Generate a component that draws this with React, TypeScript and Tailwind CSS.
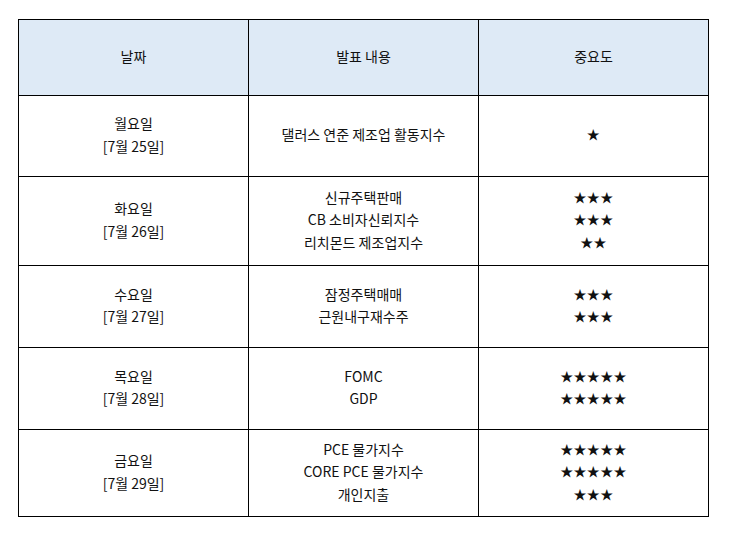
const rows = [
  { day: "월요일", date: "[7월 25일]", items: ["댈러스 연준 제조업 활동지수"], stars: [1], h: "h-[81px]" },
  {
    day: "화요일",
    date: "[7월 26일]",
    items: ["신규주택판매", "CB 소비자신뢰지수", "리치몬드 제조업지수"],
    stars: [3, 3, 2],
    h: "h-[89px]",
  },
  { day: "수요일", date: "[7월 27일]", items: ["잠정주택매매", "근원내구재수주"], stars: [3, 3], h: "h-[82px]" },
  { day: "목요일", date: "[7월 28일]", items: ["FOMC", "GDP"], stars: [5, 5], h: "h-[82px]" },
  {
    day: "금요일",
    date: "[7월 29일]",
    items: ["PCE 물가지수", "CORE PCE 물가지수", "개인지출"],
    stars: [5, 5, 3],
    h: "h-[87px]",
  },
];

export default function App() {
  return (
    <div
      className="min-h-[534px] bg-white pl-[18px] pt-[19px] text-[14px] leading-[22.5px] text-[#111]"
      style={{ fontFamily: '"Noto Sans CJK KR", "Noto Sans", sans-serif' }}
    >
      <table className="w-[690px] table-fixed border-collapse border border-black text-center">
        <thead>
          <tr className="h-[76px] bg-[#deeaf6]">
            <th className="w-[230px] border border-black pb-[3px] font-normal">날짜</th>
            <th className="w-[230px] border border-black pb-[3px] font-normal">발표 내용</th>
            <th className="w-[230px] border border-black pb-[3px] font-normal">중요도</th>
          </tr>
        </thead>
        <tbody>
          {rows.map((r) => (
            <tr key={r.day} className={r.h}>
              <td className="border border-black pb-[3px] align-middle">
                <div>{r.day}</div>
                <div>{r.date}</div>
              </td>
              <td className="border border-black pb-[3px] align-middle">
                {r.items.map((it) => (
                  <div key={it}>{it}</div>
                ))}
              </td>
              <td className="border border-black pb-[3px] align-middle text-[13px]">
                {r.stars.map((n, i) => (
                  <div key={i} className="tracking-[0.3px]">
                    {"★".repeat(n)}
                  </div>
                ))}
              </td>
            </tr>
          ))}
        </tbody>
      </table>
    </div>
  );
}
